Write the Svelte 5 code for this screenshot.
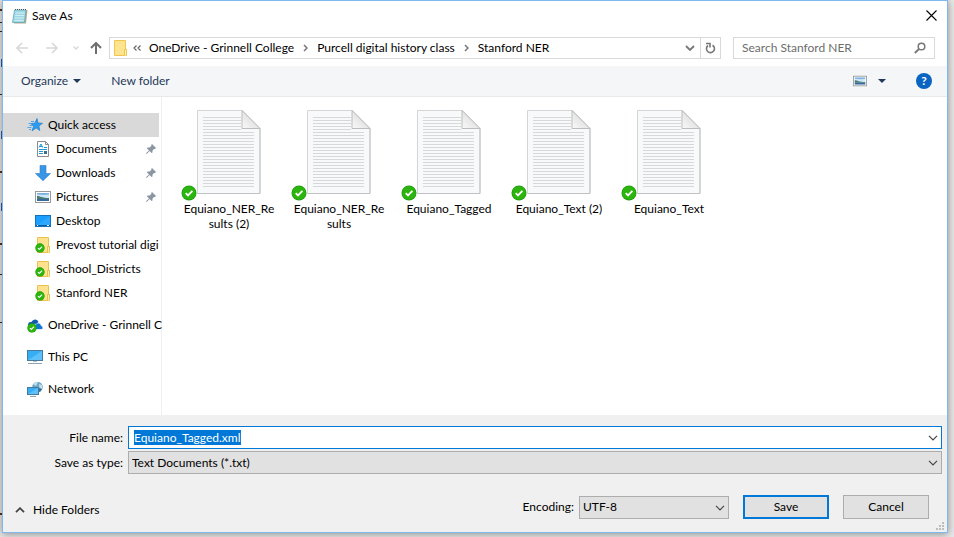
<script lang="ts">
    import { onMount } from 'svelte'

    type Place = {
        name: string
        icon: string
        pinned?: boolean
    }

    const crumbs: string[] = ['OneDrive - Grinnell College', 'Purcell digital history class', 'Stanford NER']

    const places: Place[] = [
        { name: 'Documents', icon: 'documents', pinned: true },
        { name: 'Downloads', icon: 'downloads', pinned: true },
        { name: 'Pictures', icon: 'pictures', pinned: true },
        { name: 'Desktop', icon: 'desktop' },
        { name: 'Prevost tutorial digi', icon: 'folder' },
        { name: 'School_Districts', icon: 'folder' },
        { name: 'Stanford NER', icon: 'folder' }
    ]

    const roots: Place[] = [
        { name: 'OneDrive - Grinnell C', icon: 'onedrive' },
        { name: 'This PC', icon: 'pc' },
        { name: 'Network', icon: 'network' }
    ]

    const files: string[] = ['Equiano_NER_Results (2)', 'Equiano_NER_Results', 'Equiano_Tagged', 'Equiano_Text (2)', 'Equiano_Text']

    // y position of each ruled line on the file icon
    const rules: number[] = Array.from({ length: 24 }, (_, i) => 8 + i * 3)

    let fileName: string = 'Equiano_Tagged.xml'
    let fileInput: HTMLInputElement

    onMount(() => {
        fileInput.focus()
        fileInput.select()
    })
</script>

{#snippet check()}
    <circle cx="8" cy="8" r="7.5" fill="#1f9a10" />
    <circle cx="8" cy="8" r="6.8" fill="#2db50f" />
    <path d="M4.7 8.2 7 10.4 11.4 5.8" fill="none" stroke="#fff" stroke-width="1.8" />
{/snippet}

{#snippet chevron()}
    <svg class="chevron" width="10" height="6" viewBox="0 0 10 6"><path d="M1 .8 5 4.8 9 .8" fill="none" stroke="currentColor" stroke-width="1.2" /></svg>
{/snippet}

{#snippet picture()}
    <rect x=".5" y="2.5" width="15" height="11" fill="#fff" stroke="#9a9a9a" />
    <rect x="2" y="4" width="12" height="8" fill="#cfe8f8" />
    <path d="M2 4h12v1.5L9 6 2 5.500z" fill="#7fb2e0" />
    <path d="M2 7c3 0 5 2 12 2v1H2z" fill="#4a7a74" />
    <path d="M2 10h12v2H2z" fill="#386b9c" />
{/snippet}

{#snippet icon(name: string)}
    <svg class="icon" width="16" height="16" viewBox="0 0 16 16" aria-hidden="true">
        {#if name === 'quick'}
            <path d="M10 1.500 11 6l4.500.3-3.600 2.700.9 4.500L9.200 11 5 13.800 6.500 9.500 4 6.500l3.800-.3z" fill="#2c9cf0" stroke="#1c7fcf" stroke-width=".7" />
            <path d="M4 4.500h3M1.500 6.500h3M2.500 8.500h3M.5 10.500h4M2 12.500h2" stroke="#4ea6e6" />
        {:else if name === 'documents'}
            <path d="M2.5.5h8l3 3v12h-11z" fill="#fff" stroke="#8b8b8b" />
            <path d="M10.5.5v3h3" fill="none" stroke="#8b8b8b" />
            <path d="M4 6.500 6 3l1.500 3.500M4.500 5.500h3M9 6.500h3M4 8.500h8M4 10.500h4M4 12.500h4" fill="none" stroke="#2196d8" />
            <rect x="9" y="10" width="3" height="3" fill="#3f6f8f" />
        {:else if name === 'downloads'}
            <path d="M5 .5h6v8h4.500L8 15.800.500 8.500H5z" fill="#3a95e4" stroke="#2b7fca" stroke-width=".6" />
        {:else if name === 'pictures'}
            {@render picture()}
        {:else if name === 'desktop'}
            <rect x=".5" y="2.500" width="15" height="11" fill="#1a9fff" stroke="#1272bd" />
            <path d="M1 13 15 3v10z" fill="#46b3ff" opacity=".45" />
            <path d="M1 12.500h14" stroke="#0b5c9e" />
            <path d="M2 12.500h1M12 12.500h2" stroke="#fff" />
        {:else if name === 'folder'}
            <path d="M2.500.500h11v9h1v6h-12z" fill="#ffe28d" stroke="#e9c14f" />
            <path d="M12.500 15.500v-6h2v6" fill="#ffefb5" stroke="#e9c14f" />
            <g transform="translate(0 6) scale(.62)">{@render check()}</g>
        {:else if name === 'onedrive'}
            <path d="M1.500 9C0 6 3 4.500 4.500 5 6 1.500 10.500 1.500 11.500 5L9 9z" fill="#0d5cae" />
            <path d="M6 12.500c-2-4 .5-6 3-5 2-3 5-1 5 1 2 0 2.500 3 1 4z" fill="#0f78d4" stroke="#fff" stroke-width=".7" />
            <g transform="translate(0 6) scale(.62)">{@render check()}</g>
        {:else if name === 'pc'}
            <rect x=".5" y="1.500" width="15" height="10" fill="#35aef5" stroke="#477b9d" />
            <path d="M1 11 15 2v9z" fill="#77ccff" opacity=".6" />
            <path d="M6 12h4v1H6z" fill="#b5c2cc" />
            <path d="M1 14.500h14" stroke="#8fa3b1" />
        {:else if name === 'network'}
            <circle cx="10.500" cy="6" r="5.300" fill="#6ea7c4" />
            <path d="M6 3c2-2 4-2 5-2L9 5zM12 3l3 1 .5 4-3-1z" fill="#c4e0e8" />
            <path d="M12 7l3 1-2 3-2-1z" fill="#356f9c" />
            <rect x=".5" y="6.500" width="11" height="7" fill="#35aef5" stroke="#477b9d" />
            <path d="M1 13 11 7v6z" fill="#77ccff" opacity=".6" />
            <path d="M3 15.500h6" stroke="#8fa3b1" />
        {/if}
    </svg>
{/snippet}

<main class="screen">
    <!-- edge of the document that lies under the dialog -->
    <svg class="behind" width="2" height="537" viewBox="0 0 2 537" aria-hidden="true">
        <path d="M0 22.500h2M0 31.500h2M0 94.500h2M0 274.500h2M0 322.500h2" stroke="#222" />
        <path d="M0 9h2v2H0zM0 171h2v2H0zM0 243h2v2H0zM0 513h2v2H0z" fill="#4a2a10" />
        <path d="M1.500 59v8M1.500 131v8M1.500 203v8" stroke="#1f4f8f" />
    </svg>
    <div class="dialog" role="dialog" aria-labelledby="title">
        <header class="titlebar">
            <svg width="16" height="16" viewBox="0 0 16 16" aria-hidden="true">
                <path d="M3 2h12.500l-1.500 13.500H2z" fill="#b7a98a" />
                <path d="M2.500 2H14l-1.500 12.500H.5z" fill="#9fd8e4" stroke="#62a9ba" stroke-width=".8" />
                <path d="M3.500 5h9M3.200 7.500h9M3 10h9M2.500 12.500h9" stroke="#cdeef5" />
                <path d="M3 1.500h12" stroke="#555" stroke-dasharray="1 1" />
            </svg>
            <h1 id="title">Save As</h1>
            <button class="close" aria-label="Close">
                <svg width="11" height="11" viewBox="0 0 11 11"><path d="M.5.500l10 10M10.500.500l-10 10" stroke="#000" stroke-width="1.100" /></svg>
            </button>
        </header>

        <nav class="navbar">
            <div class="arrows">
                <button class="faint" aria-label="Back">
                    <svg width="12" height="12" viewBox="0 0 12 12"><path d="M12 6H1M6 1 1 6l5 5" fill="none" stroke="currentColor" stroke-width="1.600" /></svg>
                </button>
                <button class="faint" aria-label="Forward">
                    <svg width="12" height="12" viewBox="0 0 12 12"><path d="M0 6h11M6 1l5 5-5 5" fill="none" stroke="currentColor" stroke-width="1.600" /></svg>
                </button>
                <button class="faint recent" aria-label="Recent locations">
                    <svg width="6" height="4" viewBox="0 0 6 4"><path d="M.5.500 3 3 5.500.500" fill="none" stroke="currentColor" stroke-width="1.400" /></svg>
                </button>
                <button class="up" aria-label="Up">
                    <svg width="12" height="12" viewBox="0 0 12 12"><path d="M6 12V1M1 6l5-5 5 5" fill="none" stroke="currentColor" stroke-width="2" /></svg>
                </button>
            </div>
            <div class="address">
                <svg class="folder" width="14" height="16" viewBox="0 0 14 16" aria-hidden="true">
                    <path d="M.5.500h11v9h1v6H.5z" fill="#ffe48f" stroke="#f0c64e" />
                    <path d="M10.500 15.500v-6h2v6" fill="#fff0b8" stroke="#f0c64e" />
                </svg>
                <svg class="more" width="8" height="6" viewBox="0 0 8 6" aria-hidden="true"><path d="M3.500.500 1 3l2.500 2.500M7.500.500 5 3l2.500 2.500" fill="none" stroke="#666" stroke-width="1.200" /></svg>
                {#each crumbs as crumb, i}
                    {#if i > 0}
                        <svg class="sep" width="5" height="8" viewBox="0 0 5 8" aria-hidden="true"><path d="M1 1l3 3-3 3" fill="none" stroke="#777" stroke-width="1.500" /></svg>
                    {/if}
                    <button class="crumb">{crumb}</button>
                {/each}
                <button class="history" aria-label="Previous locations">
                    <svg width="10" height="6" viewBox="0 0 10 6"><path d="M1 1l4 4 4-4" fill="none" stroke="#777" stroke-width="1.800" /></svg>
                </button>
                <button class="refresh" aria-label="Refresh">
                    <svg width="11" height="12" viewBox="0 0 11 12"><path d="M7.500 3.200a4 4 0 1 1-4.500.3M1 1.500h4v4" fill="none" stroke="#777" stroke-width="1.600" /></svg>
                </button>
            </div>
            <div class="search">
                <input type="search" placeholder="Search Stanford NER" aria-label="Search Stanford NER" />
                <svg width="12" height="12" viewBox="0 0 12 12" aria-hidden="true"><circle cx="7.500" cy="4.500" r="3.300" fill="none" stroke="#777" stroke-width="1.500" /><path d="M5 7 .8 11" stroke="#777" stroke-width="1.800" /></svg>
            </div>
        </nav>

        <div class="toolbar">
            <button class="organize">Organize <span class="caret"></span></button>
            <button>New folder</button>
            <button class="view" aria-label="Change your view">
                <svg width="14" height="12" viewBox="0 2 16 12">{@render picture()}</svg>
                <span class="caret"></span>
            </button>
            <button class="help" aria-label="Help">?</button>
        </div>

        <div class="body">
            <aside class="sidebar">
                <button class="place root selected">{@render icon('quick')}<span class="name">Quick access</span></button>
                {#each places as place}
                    <button class="place">
                        {@render icon(place.icon)}
                        <span class="name">{place.name}</span>
                        {#if place.pinned}
                            <svg class="pin" width="10" height="10" viewBox="0 0 10 10" aria-hidden="true"><path d="M6 0l4 4-1 1H8L6.500 6.500V8.500L5.500 9 3.500 7 .8 10 0 9.200 3 6.500 1 4.500 1.500 3.500H3.500L5.300 2V.8z" fill="#8a97a3" /></svg>
                        {/if}
                    </button>
                {/each}
                {#each roots as place}
                    <button class="place root spaced">{@render icon(place.icon)}<span class="name">{place.name}</span></button>
                {/each}
            </aside>

            <section class="files" aria-label="Files">
                {#each files as file}
                    <button class="file">
                        <span class="thumb">
                            <svg width="64" height="86" viewBox="0 0 64 86" aria-hidden="true">
                                <defs>
                                    <linearGradient id="fold" x1="0" y1="1" x2="1" y2="0">
                                        <stop offset="0" stop-color="#fafafa" />
                                        <stop offset="1" stop-color="#cfcfcf" />
                                    </linearGradient>
                                </defs>
                                <path d="M.5 1.500h45l17.500 18V84.500H.5z" fill="#f8f9fa" stroke="#d4d5d6" />
                                {#each rules as y}
                                    <path d="M6 {y + .5}h{y < 21 ? 38 : 51}" stroke="#d6d8da" />
                                {/each}
                                <path d="M45 1.500v18h18z" fill="url(#fold)" stroke="#bcbcbc" />
                                <path d="M63 19.500v65H.5" fill="none" stroke="#bfc1c3" />
                            </svg>
                            <svg class="badge" width="16" height="16" viewBox="0 0 16 16" aria-hidden="true">{@render check()}</svg>
                        </span>
                        <span class="label">{file}</span>
                    </button>
                {/each}
            </section>
        </div>

        <footer class="footer">
            <div class="field">
                <label for="file-name">File name:</label>
                <div class="combo">
                    <input id="file-name" type="text" bind:value={fileName} bind:this={fileInput} />
                    {@render chevron()}
                </div>
            </div>
            <div class="field">
                <label for="file-type">Save as type:</label>
                <div class="combo">
                    <select id="file-type">
                        <option>Text Documents (*.txt)</option>
                    </select>
                    {@render chevron()}
                </div>
            </div>
            <div class="actions">
                <button class="hide">
                    <svg width="10" height="6" viewBox="0 0 10 6" aria-hidden="true"><path d="M1 5.200l4-4 4 4" fill="none" stroke="#444" stroke-width="1.800" /></svg>
                    Hide Folders
                </button>
                <label for="encoding">Encoding:</label>
                <div class="combo encoding">
                    <select id="encoding">
                        <option>UTF-8</option>
                    </select>
                    {@render chevron()}
                </div>
                <button class="btn primary">Save</button>
                <button class="btn">Cancel</button>
            </div>
            <svg class="grip" width="8" height="8" viewBox="0 0 8 8" aria-hidden="true"><path d="M6 0h2v2H6zM3 3h2v2H3zM6 3h2v2H6zM0 6h2v2H0zM3 6h2v2H3zM6 6h2v2H6z" fill="#bdbdbd" /></svg>
        </footer>
    </div>
</main>

<style>
    :global(body) {
        margin: 0;
    }
    .screen {
        position: relative;
        display: flex;
        box-sizing: border-box;
        min-height: 100vh;
        padding: 0 6px 4px 2px;
        overflow: hidden;
        background-color: #e8e8e8;
        font-family: Lato, "Open Sans", sans-serif;
        font-size: 12px;
        line-height: 16px;
        color: #000;
    }
    .behind {
        position: absolute;
        top: 0;
        left: 0;
    }
    .dialog {
        display: flex;
        flex: 1;
        flex-direction: column;
        min-width: 0;
        border: 1px solid #7eb8ef;
        background-color: #fff;
        box-shadow: 0 1px 8px rgba(0, 0, 0, 0.4);
    }
    button {
        display: flex;
        align-items: center;
        padding: 0;
        border: none;
        background: none;
        font: inherit;
        color: inherit;
        white-space: nowrap;
    }
    input,
    select {
        font: inherit;
        color: inherit;
        outline: none;
    }
    svg {
        flex: none;
    }

    .titlebar {
        display: flex;
        align-items: center;
        gap: 4px;
        height: 29px;
        padding: 0 10px 0 9px;
    }
    h1 {
        flex: 1;
        margin: 0;
        font-size: 12px;
        font-weight: normal;
    }

    .navbar {
        display: flex;
        align-items: center;
        gap: 12px;
        padding: 7px 12px 7px 13px;
    }
    .arrows {
        display: flex;
        align-items: center;
        margin-right: -5px;
    }
    .arrows button {
        margin-right: 18px;
    }
    .arrows .recent {
        margin: 0 11px 0 -3px;
    }
    .arrows .up {
        margin: 0;
        color: #6e6e6e;
    }
    .faint {
        color: #d8d8d8;
    }
    .address {
        display: flex;
        flex: 1;
        align-items: center;
        height: 20px;
        padding-left: 4px;
        border: 1px solid #d9d9d9;
    }
    .more {
        margin: 0 8px 0 5px;
    }
    .sep {
        margin: 0 9px;
    }
    .history {
        margin: 0 5px 0 auto;
    }
    .refresh {
        align-self: stretch;
        justify-content: center;
        width: 20px;
        border-left: 1px solid #d9d9d9;
    }
    .search {
        display: flex;
        align-items: center;
        box-sizing: border-box;
        width: 202px;
        height: 22px;
        padding: 0 8px;
        border: 1px solid #d9d9d9;
    }
    .search input {
        flex: 1;
        min-width: 0;
        padding: 0;
        border: none;
    }
    .search input::placeholder {
        color: #6d6d6d;
    }

    .toolbar {
        display: flex;
        align-items: center;
        gap: 30px;
        height: 30px;
        padding: 0 15px 0 18px;
        border-bottom: 1px solid #e8e9eb;
        background-color: #f5f6f7;
        color: #1e395b;
    }
    .caret {
        margin-left: 5px;
        border: 4px solid transparent;
        border-top-color: #1e395b;
        border-bottom: none;
    }
    .view {
        gap: 6px;
        margin-left: auto;
    }
    .help {
        justify-content: center;
        width: 16px;
        height: 16px;
        border-radius: 50%;
        background-color: #0a64c2;
        color: #fff;
        font-weight: bold;
    }

    .body {
        display: flex;
        flex: 1;
    }
    .sidebar {
        box-sizing: border-box;
        width: 159px;
        padding: 16px 2px 14px 0;
        border-right: 1px solid #f0f0f0;
    }
    .place {
        gap: 5px;
        width: 100%;
        height: 24px;
        padding-left: 32px;
    }
    .root {
        padding-left: 24px;
    }
    .selected {
        background-color: #d9d9d9;
    }
    .spaced {
        margin-top: 8px;
    }
    .name {
        flex: 1;
        text-align: left;
    }
    .pin {
        margin-right: 3px;
    }

    .files {
        display: flex;
        flex: 1;
        flex-wrap: wrap;
        align-content: flex-start;
        gap: 10px;
        padding: 12px 17px;
    }
    .file {
        flex-direction: column;
        width: 100px;
        white-space: normal;
    }
    .thumb {
        position: relative;
        display: flex;
        margin-bottom: 6px;
    }
    .badge {
        position: absolute;
        left: -16px;
        bottom: -6px;
    }
    .label {
        width: 92px;
        line-height: 15px;
        word-break: break-all;
    }

    .footer {
        position: relative;
        padding: 11px 5px 13px;
        background-color: #f0f0f0;
    }
    .field {
        display: flex;
        align-items: center;
        gap: 5px;
        margin-bottom: 2px;
    }
    .field label {
        width: 115px;
        text-align: right;
    }
    .combo {
        position: relative;
        flex: 1;
    }
    .combo input,
    .combo select {
        display: block;
        box-sizing: border-box;
        width: 100%;
        height: 23px;
        padding: 0 20px 0 3px;
        border: 1px solid #adadad;
        border-radius: 0;
        background-color: #e1e1e1;
        appearance: none;
    }
    .combo input {
        padding-left: 5px;
        border-color: #0078d7;
        background-color: #fff;
    }
    .combo input::selection {
        background-color: #0078d7;
        color: #fff;
    }
    .combo .chevron {
        position: absolute;
        top: 9px;
        right: 4px;
        color: #444;
        pointer-events: none;
    }
    .actions {
        display: flex;
        align-items: center;
        margin-top: 21px;
        padding-right: 13px;
    }
    .hide {
        gap: 8px;
        margin: 6px auto 0 7px;
    }
    .actions label {
        margin-right: 5px;
    }
    .encoding {
        flex: none;
        width: 150px;
    }
    .btn {
        justify-content: center;
        box-sizing: border-box;
        width: 86px;
        height: 24px;
        margin-left: 14px;
        border: 1px solid #adadad;
        background-color: #e1e1e1;
    }
    .primary {
        border: 2px solid #0078d7;
    }
    .grip {
        position: absolute;
        right: 3px;
        bottom: 2px;
    }
</style>
